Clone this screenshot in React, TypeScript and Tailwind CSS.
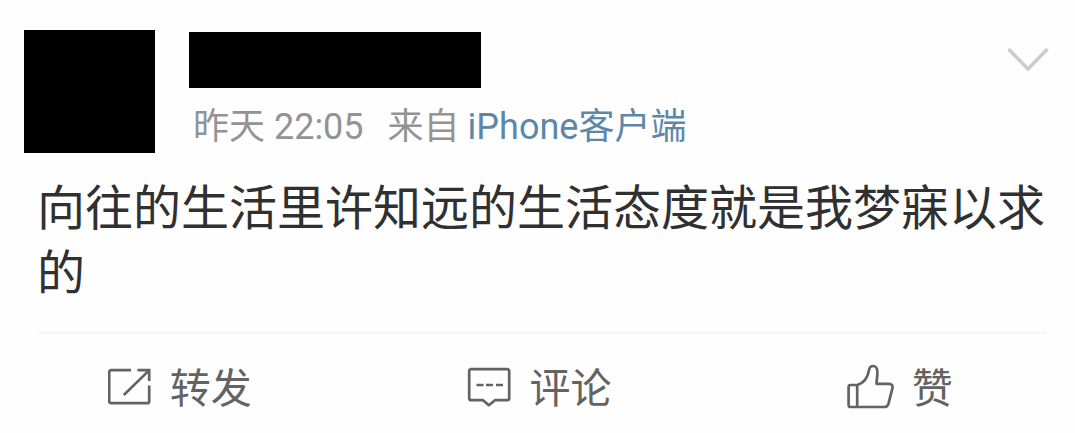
import type { ReactNode } from "react";

function RepostIcon() {
  return (
    <svg className="mb-1" width="44" height="38" viewBox="0 0 44 38" fill="none" stroke="currentColor" strokeWidth="2.7" aria-hidden="true">
      <path d="M23 2.200H3.200a2 2 0 0 0-2 2v29a2 2 0 0 0 2 2h36a2 2 0 0 0 2-2V17.500" />
      <path d="M29.500 2.200h11.700V13M40.800 2.600 15.800 27" />
    </svg>
  );
}

function CommentIcon() {
  return (
    <svg className="mb-1" width="44" height="40" viewBox="0 0 44 40" fill="none" stroke="currentColor" strokeWidth="2.7" strokeLinejoin="round" aria-hidden="true">
      <path d="M4.200 2.200h36a2 2 0 0 1 2 2v27a2 2 0 0 1-2 2H28l-6.200 5L16 33.200H4.200a2 2 0 0 1-2-2v-27a2 2 0 0 1 2-2Z" />
      <path d="M9.500 18h7M19 18h7M29 18h7" />
    </svg>
  );
}

function LikeIcon() {
  return (
    <svg className="mb-1" width="48" height="46" viewBox="0 0 48 46" fill="none" stroke="currentColor" strokeWidth="2.7" strokeLinejoin="round" aria-hidden="true">
      <path d="M11.200 21H4.600a2 2 0 0 0-2 2v18a2 2 0 0 0 2 2h33.200c2.400 0 4-1.100 4.600-3.200l4-15.500c.7-2.800-.6-4.500-3.400-4.500H30.500c.2-4.800.9-7.300.9-11.600 0-3.500-1.600-6.200-4.300-6.200-2.400 0-3.600 1.400-4.100 4.200-1.300 7.700-5.200 12.800-11.800 14.800Z" />
      <path d="M11.200 21v22" />
    </svg>
  );
}

function Action({ icon, label }: { icon: ReactNode; label: string }) {
  return (
    <button type="button" className="flex items-center justify-center gap-[18px] text-[41px] leading-[56px] text-[#636363]">
      {icon}
      <span>{label}</span>
    </button>
  );
}

export default function App() {
  return (
    <article className="overflow-hidden bg-[#fefefe] pb-4 font-[Roboto,'Noto_Sans_CJK_SC',sans-serif]">
      <header className="flex items-start pt-[30px] pr-[26px] pl-6">
        <div className="h-[123px] w-[131px] shrink-0 bg-black" />
        <div className="ml-[34px] flex-1 pt-0.5">
          <div className="h-14 w-[292px] bg-black" />
          <p className="mt-3.5 flex items-center pl-1 text-[36px] leading-[50px] text-[#939393]">
            <time>昨天 22:05</time>
            <span className="ml-6">来自</span>
            <a href="#client" className="ml-2 text-[#5d87a8]">iPhone客户端</a>
          </p>
        </div>
        <button type="button" aria-label="更多" className="mt-4 text-[#cccccc]">
          <svg width="42" height="26" viewBox="0 0 42 26" fill="none" stroke="currentColor" strokeWidth="3.500" aria-hidden="true">
            <path d="M1.500 3 21 23 40.500 3" />
          </svg>
        </button>
      </header>
      <p className="mr-[29px] ml-[37px] mt-[23px] border-b-2 border-[#f5f5f5] pb-[26px] text-[48px] leading-[65px] text-[#303030]">
        向往的生活里许知远的生活态度就是我梦寐以求的
      </p>
      <footer className="-mr-1 mt-[27px] grid grid-cols-3">
        <Action icon={<RepostIcon />} label="转发" />
        <Action icon={<CommentIcon />} label="评论" />
        <Action icon={<LikeIcon />} label="赞" />
      </footer>
    </article>
  );
}
